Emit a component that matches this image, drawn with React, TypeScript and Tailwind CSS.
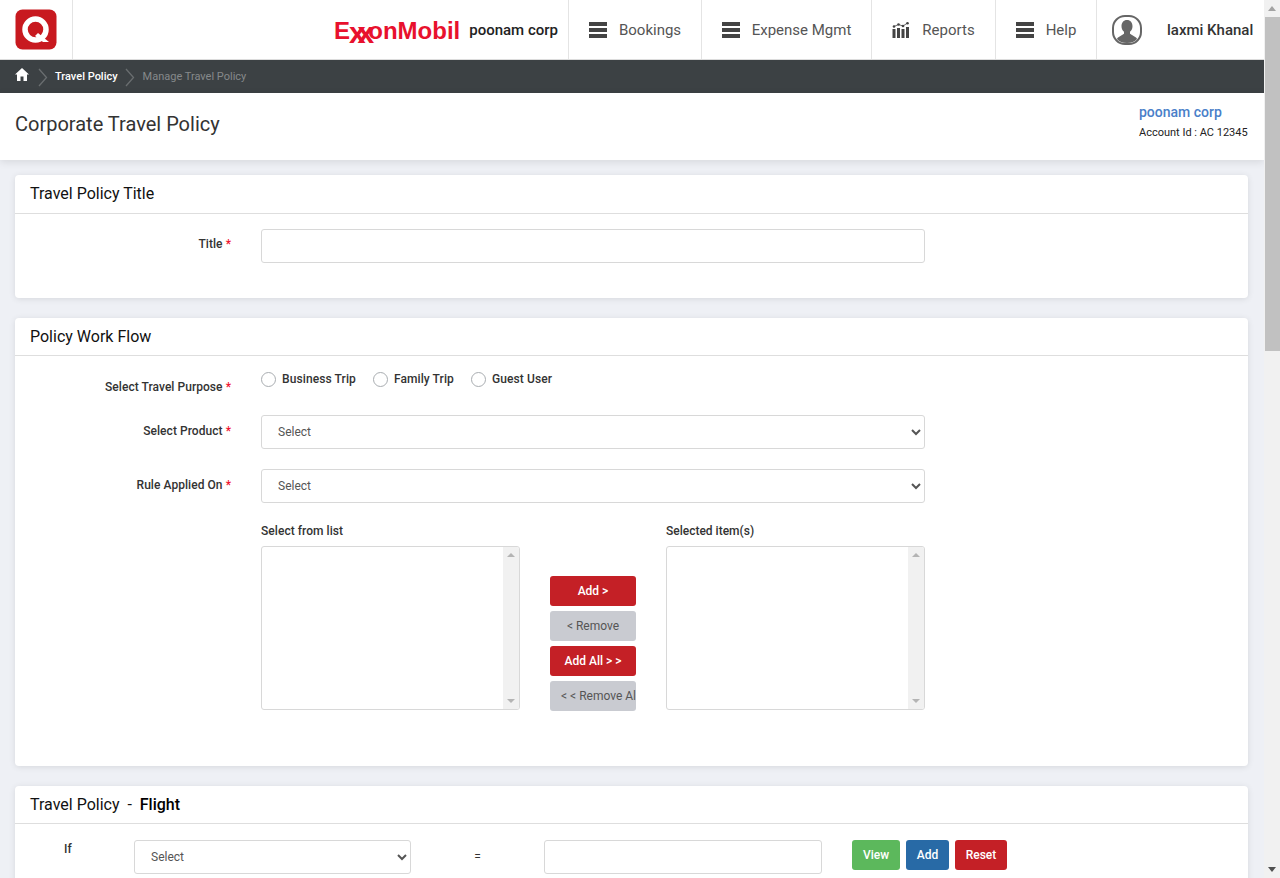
import type { ReactNode } from 'react';

const navItems = [
  { label: 'Bookings', icon: 'bars', cell: 'w-[133px]' },
  { label: 'Expense Mgmt', icon: 'bars', cell: 'w-[170px]' },
  { label: 'Reports', icon: 'chart', cell: 'w-[124px]' },
  { label: 'Help', icon: 'bars', cell: 'w-[101px]' },
];

function BarsIcon() {
  return (
    <svg width="18" height="16" viewBox="0 0 18 16" fill="#444">
      <rect x="0" y="0" width="18" height="4" />
      <rect x="0" y="6" width="18" height="4" />
      <rect x="0" y="12" width="18" height="4" />
    </svg>
  );
}

function ChartIcon() {
  return (
    <svg width="18" height="16" viewBox="0 0 18 16" fill="#444">
      <rect x="0.500" y="7" width="3" height="9" />
      <rect x="5" y="6" width="3" height="10" />
      <rect x="9.500" y="7" width="3" height="9" />
      <rect x="14" y="5" width="3" height="11" />
      <path d="M2 4.500L6.500 2.500 11 4 15.500 1" fill="none" stroke="#444" strokeWidth="0.800" />
      <circle cx="2" cy="4.500" r="1.300" />
      <circle cx="6.500" cy="2.500" r="1.300" />
      <circle cx="11" cy="4" r="1.300" />
      <circle cx="15.500" cy="1.300" r="1.300" />
    </svg>
  );
}

function UserIcon() {
  return (
    <svg width="30" height="30" viewBox="0 0 30 30">
      <rect x="1" y="1" width="28" height="28" rx="12" fill="#fff" stroke="#666" strokeWidth="2" />
      <path
        d="M15 5c-3.400 0-5.500 2.700-5.500 6.200 0 2.400 1 4.400 2.500 5.600v2L6 22.500c-.6.400-1 .9-1 1.500 2 2.500 5.500 4 10 4s8-1.500 10-4c0-.6-.4-1.100-1-1.500l-6-3.700v-2c1.500-1.200 2.500-3.200 2.500-5.600C20.500 7.700 18.400 5 15 5z"
        fill="#666"
      />
    </svg>
  );
}

function QLogo() {
  return (
    <svg width="42" height="41" viewBox="0 0 42 41">
      <rect x="0.500" y="0.500" width="41" height="40" rx="7" fill="#c8191f" />
      <circle cx="20.500" cy="20.500" r="10.500" fill="none" stroke="#fff" strokeWidth="5.500" />
      <path d="M23 24l11 9h-6l-8-6z" fill="#fff" />
    </svg>
  );
}

function Crumb() {
  return (
    <svg width="10" height="19" viewBox="0 0 10 19" fill="none" stroke="#6a6e70" strokeWidth="1.300">
      <path d="M1 1l7.500 8.500L1 18" />
    </svg>
  );
}

function Card({ title, head, children }: { title: ReactNode; head: string; children: ReactNode }) {
  return (
    <section className="bg-white rounded-[4px] shadow-[0_1px_6px_rgba(0,0,0,0.1)]">
      <h2 className={`${head} border-b border-[#dedede] px-[15px] flex items-center text-[16px] font-normal text-[#111]`}>
        {title}
      </h2>
      {children}
    </section>
  );
}

function Required({ text }: { text: string }) {
  return (
    <span className="text-[12px] font-medium text-[#333] tracking-[0.05px]">
      {text} <span className="text-[#f0132d]">*</span>
    </span>
  );
}

function SelectBox({ className }: { className: string }) {
  return (
    <select className={`h-[34px] bg-white border border-[#d8d8d8] rounded-[3px] pl-[12px] text-[12px] text-[#555] ${className}`}>
      <option>Select</option>
    </select>
  );
}

function ListBox() {
  return (
    <div className="h-[164px] w-[259px] border border-[#d8d8d8] rounded-[3px] flex justify-end overflow-hidden">
      <div className="w-[16px] bg-[#f1f1f1] flex flex-col items-center justify-between py-[6px]">
        <span className="w-0 h-0 border-x-[4px] border-x-transparent border-b-[4px] border-b-[#b4b4b4]" />
        <span className="w-0 h-0 border-x-[4px] border-x-transparent border-t-[4px] border-t-[#b4b4b4]" />
      </div>
    </div>
  );
}

function MoveButton({ label, red, clipped }: { label: string; red?: boolean; clipped?: boolean }) {
  return (
    <button
      className={`h-[30px] w-[86px] rounded-[3px] text-[12px] whitespace-nowrap overflow-hidden flex items-center ${
        clipped ? 'pl-[11px]' : 'justify-center'
      } ${red ? 'bg-[#c42026] text-white font-medium' : 'bg-[#c9cbd1] text-[#555]'}`}
    >
      {label}
    </button>
  );
}

function Radio({ label }: { label: string }) {
  return (
    <label className="flex items-center gap-[6px] h-[15px] text-[12px] font-medium text-[#333] tracking-[0.1px]">
      <input type="radio" name="purpose" className="appearance-none w-[15px] h-[15px] rounded-full border border-[#a9adb1] bg-white" />
      <span className="pb-[2px]">{label}</span>
    </label>
  );
}

export default function App() {
  return (
    <div className="h-[878px] overflow-hidden flex bg-[#eef0f5] font-['Roboto',sans-serif]">
      <div className="flex-1 min-w-0">
        {/* Top bar */}
        <header className="h-[60px] bg-white border-b border-[#dcdcdc] flex">
          <div className="w-[73px] border-r border-[#e4e4e4] pl-[15px] pt-[9px]">
            <QLogo />
          </div>
          <div className="flex-1 flex items-center justify-end pr-[10px] pt-[1px]">
            <span className="font-['Liberation_Sans',sans-serif] font-bold text-[24px] text-[#e8112d] mr-[9px] mb-[2px] leading-none whitespace-nowrap">
              E<span className="inline-block text-[30px] leading-none translate-y-[4px] -ml-[1px]">x</span>
              <span className="inline-block text-[30px] leading-none translate-y-[4px] -ml-[8px]">x</span>
              <span className="-ml-[6px]">onMobil</span>
            </span>
            <span className="text-[15px] font-medium text-[#222]">poonam corp</span>
          </div>
          {navItems.map((item) => (
            <div key={item.label} className={`${item.cell} border-l border-[#e4e4e4] pt-[1px] flex items-center justify-center gap-[12px] text-[15px] text-[#555]`}>
              {item.icon === 'bars' ? <BarsIcon /> : <ChartIcon />}
              <span>{item.label}</span>
            </div>
          ))}
          <div className="w-[168px] border-l border-[#e4e4e4] flex items-center pl-[15px]">
            <UserIcon />
            <span className="ml-[25px] text-[15px] font-medium text-[#333] whitespace-nowrap pt-[1px]">laxmi Khanal</span>
          </div>
        </header>

        {/* Breadcrumb */}
        <nav className="h-[33px] bg-[#3c4144] flex items-center pl-[15px] text-[11px]">
          <svg className="mb-[5px]" width="14" height="13" viewBox="0 0 14 13" fill="#fff">
            <path d="M7 0L0 6.500h2V13h3.500V8.500h3V13H12V6.500h2z" />
          </svg>
          <span className="ml-[9px] mr-[7px] pt-[1px]">
            <Crumb />
          </span>
          <span className="text-white font-medium pt-[1px]">Travel Policy</span>
          <span className="ml-[7px] mr-[8px] pt-[1px]">
            <Crumb />
          </span>
          <span className="text-[#86898b] pt-[1px]">Manage Travel Policy</span>
        </nav>

        {/* Page title */}
        <div className="h-[67px] bg-white shadow-[0_2px_8px_rgba(0,0,0,0.1)] flex items-start justify-between pl-[15px] pr-[16px]">
          <h1 className="mt-[16px] leading-[30px] text-[20px] font-normal text-[#333]">Corporate Travel Policy</h1>
          <div className="w-[109px] pt-[9px]">
            <div className="text-[14px] font-medium text-[#4a7fc9] leading-[20px]">poonam corp</div>
            <div className="text-[11px] text-[#222] leading-[20px] pt-[1px] whitespace-nowrap">Account Id : AC 12345</div>
          </div>
        </div>

        <main className="pl-[15px] pr-[16px] pt-[15px] flex flex-col gap-[20px]">
          <Card title="Travel Policy Title" head="h-[39px]">
            <div className="flex pt-[15px] pb-[35px]">
              <label className="w-[216px] text-right pt-[7px] leading-[14px]">
                <Required text="Title" />
              </label>
              <input className="ml-[30px] w-[664px] h-[34px] border border-[#d8d8d8] rounded-[3px] bg-white" />
            </div>
          </Card>

          <Card title="Policy Work Flow" head="h-[38px]">
            <div className="h-[410px] pt-[16px]">
              <div className="flex">
                <div className="w-[216px] text-right pt-[7px] leading-[14px]">
                  <Required text="Select Travel Purpose" />
                </div>
                <div className="ml-[30px] flex gap-[17px]">
                  <Radio label="Business Trip" />
                  <Radio label="Family Trip" />
                  <Radio label="Guest User" />
                </div>
              </div>
              <div className="flex mt-[21px]">
                <div className="w-[216px] text-right pt-[8px] leading-[14px]">
                  <Required text="Select Product" />
                </div>
                <SelectBox className="ml-[30px] w-[664px]" />
              </div>
              <div className="flex mt-[20px]">
                <div className="w-[216px] text-right pt-[8px] leading-[14px]">
                  <Required text="Rule Applied On" />
                </div>
                <SelectBox className="ml-[30px] w-[664px]" />
              </div>
              <div className="ml-[246px] mt-[20px] flex">
                <div>
                  <div className="text-[12px] font-medium text-[#333] h-[23px] leading-[16px] tracking-[0.05px]">Select from list</div>
                  <ListBox />
                </div>
                <div className="ml-[30px] mt-[53px] flex flex-col gap-[5px]">
                  <MoveButton label="Add >" red />
                  <MoveButton label="< Remove" />
                  <MoveButton label="Add All > >" red />
                  <MoveButton label="< < Remove All" clipped />
                </div>
                <div className="ml-[30px]">
                  <div className="text-[12px] font-medium text-[#333] h-[23px] leading-[16px]">Selected item(s)</div>
                  <ListBox />
                </div>
              </div>
            </div>
          </Card>

          <Card
            head="h-[38px]"
            title={
              <>
                Travel Policy&nbsp;&nbsp;-&nbsp;&nbsp;<span className="font-medium text-black">Flight</span>
              </>
            }
          >
            <div className="flex items-start pt-[16px] pb-[16px]">
              <div className="w-[119px] pl-[49px] text-[12px] font-medium text-[#333]">If</div>
              <SelectBox className="w-[277px]" />
              <div className="w-[133px] pt-[8px] text-center text-[12px] text-[#333]">=</div>
              <input className="w-[278px] h-[34px] border border-[#d8d8d8] rounded-[3px] bg-white" />
              <div className="ml-[30px] flex gap-[6px]">
                <button className="h-[30px] w-[48px] rounded-[3px] bg-[#5cb85c] text-white text-[12px] font-medium">View</button>
                <button className="h-[30px] w-[43px] rounded-[3px] bg-[#286aa6] text-white text-[12px] font-medium">Add</button>
                <button className="h-[30px] w-[52px] rounded-[3px] bg-[#c42026] text-white text-[12px] font-medium">Reset</button>
              </div>
            </div>
          </Card>
        </main>
      </div>

      {/* Window scrollbar */}
      <div className="w-[16px] bg-[#f1f1f1] flex flex-col items-center">
        <div className="h-[17px] flex items-center">
          <span className="w-0 h-0 border-x-[4px] border-x-transparent border-b-[5px] border-b-[#a3a3a3]" />
        </div>
        <div className="w-[15px] h-[334px] bg-[#c1c1c1]" />
        <div className="mt-auto h-[17px] flex items-center">
          <span className="w-0 h-0 border-x-[4px] border-x-transparent border-t-[5px] border-t-[#505050]" />
        </div>
      </div>
    </div>
  );
}
